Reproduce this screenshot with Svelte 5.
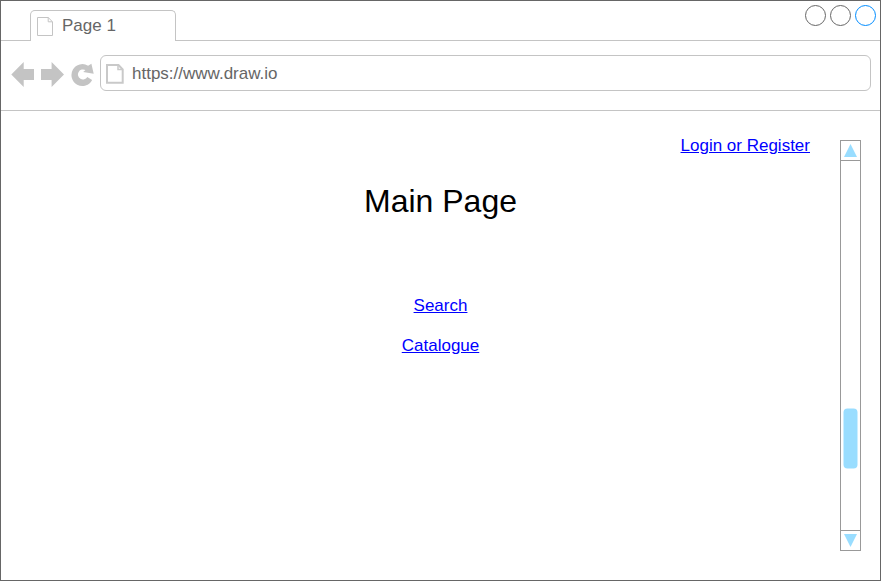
<script>
  const links = ['Search', 'Catalogue'];
  const controls = ['#666', '#666', '#008cff'];
</script>

<div class="window">
  <div class="tabs">
    <div class="tab">
      <svg width="18" height="21" viewBox="0 0 18 21" fill="none" stroke="#c4c4c4">
        <path d="M1.5 1.5H12.2L16.5 5.8V19.5H1.5ZM12.2 1.5V5.8H16.5" />
      </svg>
      <span>Page 1</span>
    </div>
    <div class="controls">
      {#each controls as color}
        <svg width="21" height="21" viewBox="0 0 21 21" fill="none" stroke={color}>
          <circle cx="10.5" cy="10.5" r="10" />
        </svg>
      {/each}
    </div>
  </div>

  <div class="toolbar">
    <svg class="nav" width="84" height="26" viewBox="0 0 84 26" fill="#c4c4c4">
      <path d="M0.3 12.5L12.7 0V7H23V18H12.7V25Z" />
      <path d="M53 12.5L40.6 0V7H30V18H40.6V25Z" />
      <path d="M77.1 3.7L80.4 1.8L82.7 11.8L72.2 9.9L74.5 8.1A5 5 0 1 0 76.3 14.9L81.1 18A10.9 11 0 1 1 77.1 3.7Z" />
    </svg>
    <div class="address">
      <svg width="20" height="22" viewBox="0 0 20 22" fill="none" stroke="#c9c9c9" stroke-width="2">
        <path d="M2 2H13.5L17.7 6.5V19.8H2Z" />
        <path d="M13 2V6.5H17.7" stroke-width="1.5" />
      </svg>
      <span>https://www.draw.io</span>
    </div>
  </div>

  <div class="page">
    <main>
      <div class="account"><a href="#login">Login or Register</a></div>
      <h1>Main Page</h1>
      <nav>
        {#each links as link}
          <a href={'#' + link}>{link}</a>
        {/each}
      </nav>
    </main>
    <div class="scrollbar">
      <div class="arrow up">
        <svg width="19" height="19" viewBox="0 0 19 19"><path d="M9.5 3L16 16H3Z" fill="#99ddff" /></svg>
      </div>
      <div class="track">
        <svg width="19" height="62" viewBox="0 0 19 62"><rect x="2.5" y="0.5" width="14" height="60" rx="4" fill="#99ddff" /></svg>
      </div>
      <div class="arrow down">
        <svg width="19" height="19" viewBox="0 0 19 19"><path d="M9.5 16L16 3H3Z" fill="#99ddff" /></svg>
      </div>
    </div>
  </div>
</div>

<style>
  .window {
    box-sizing: border-box;
    width: 881px;
    height: 581px;
    border: 1px solid #666;
    background: #fff;
    font: 17px/20px "Liberation Sans", Arial, sans-serif;
    display: flex;
    flex-direction: column;
    overflow: hidden;
  }
  svg { display: block; flex: none; }
  .tabs {
    box-sizing: border-box;
    height: 40px;
    flex: none;
    border-bottom: 1px solid #c4c4c4;
    display: flex;
    justify-content: space-between;
    padding: 0 4px 0 29px;
  }
  .tab {
    box-sizing: border-box;
    width: 146px;
    height: 31px;
    margin-top: 9px;
    border: 1px solid #c4c4c4;
    border-bottom: 0;
    border-radius: 5px 5px 0 0;
    background: #fff;
    display: flex;
    padding: 5px 0 0 5px;
    color: #666;
  }
  .tab span { margin-left: 8px; }
  .controls { display: flex; gap: 4px; padding-top: 4px; }
  .toolbar {
    box-sizing: border-box;
    height: 70px;
    flex: none;
    border-bottom: 1px solid #c4c4c4;
    display: flex;
    padding: 14px 9px 0 10px;
  }
  .nav { margin-top: 7px; }
  .address {
    box-sizing: border-box;
    flex: 1;
    height: 36px;
    margin-left: 5px;
    border: 1px solid #c4c4c4;
    border-radius: 6px;
    display: flex;
    padding: 7px 0 0 4px;
    color: #666;
  }
  .address span { margin: 1px 0 0 7px; }
  .page { flex: 1; display: flex; padding: 29px 19px 29px 0; }
  main { flex: 1; padding-left: 40px; display: flex; flex-direction: column; }
  .account { text-align: right; margin: -4px 30px 0 0; }
  a { color: #00f; text-decoration: underline; }
  h1 {
    margin: 25px 0 0;
    font-size: 32px;
    line-height: 40px;
    font-weight: 400;
    text-align: center;
    color: #000;
  }
  nav {
    margin-top: 75px;
    display: flex;
    flex-direction: column;
    align-items: center;
    gap: 20px;
  }
  .scrollbar {
    box-sizing: border-box;
    width: 21px;
    height: 411px;
    border: 1px solid #999;
    display: flex;
    flex-direction: column;
  }
  .arrow { height: 19px; flex: none; }
  .up { border-bottom: 1px solid #999; }
  .down { border-top: 1px solid #999; }
  .track { flex: 1; padding-top: 247px; }
</style>
